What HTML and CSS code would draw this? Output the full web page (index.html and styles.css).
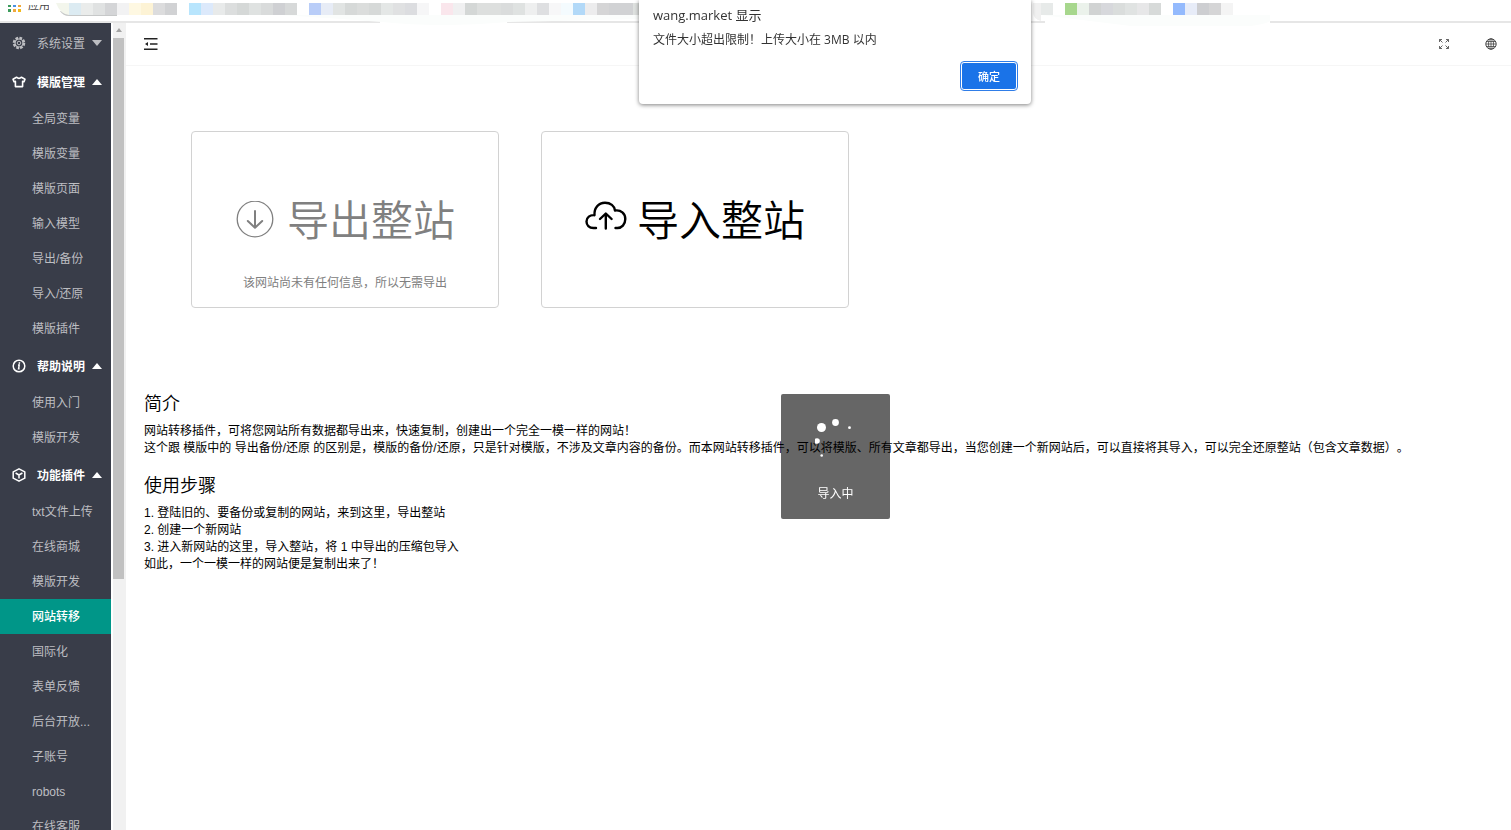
FILE: index.html
```html
<!DOCTYPE html>
<html lang="zh-CN">
<head>
<meta charset="utf-8">
<title>网站转移</title>
<link rel="stylesheet" href="styles.css">
</head>
<body>
<div class="bookmarks">
  <svg class="apps" viewBox="0 0 13 8" aria-hidden="true">
    <path fill="#3c9c5c" d="M0 0h3v2H0zM0 4h3v3H0z"/><path fill="#4a90e2" d="M5 0h3v2H5z"/><path fill="#f0a83c" d="M10 0h3v2h-3zM5 4h3v3H5z"/><path fill="#f2b91c" d="M10 4h3v3h-3z"/>
  </svg>
  <span class="apps-label"><span>应用</span></span>
  <svg class="mosaic" viewBox="56 0 1214 28" aria-hidden="true">
    <path fill="#fff" d="M380 20h127v4H380zM1045 20h225v4h-225z"/>
    <path fill="#fbfdfc" d="M280 15h359v4l-130 3q-70 6-127 0l-40-3zM1041 15h234q0 8-24 11h-120z"/>
    <path fill="#c6c8c8" d="M60 11h57v5H69q-6 0-9-5z"/>
    <path fill="#f3f6ec" d="M56 3h13v12q-9-1-13-12z"/>
    <g>
      <path fill="#dcebf2" d="M69 3h12v12H69z"/><path fill="#eaeceb" d="M81 3h12v12H81z"/><path fill="#e0e2e2" d="M93 3h12v12H93z"/><path fill="#d4d5d7" d="M105 3h12v12h-12z"/><path fill="#f2f2f3" d="M117 3h12v12h-12z"/><path fill="#fef8e2" d="M129 3h12v12h-12z"/><path fill="#fdf3d5" d="M141 3h12v12h-12z"/><path fill="#dcdcdd" d="M153 3h12v12h-12z"/><path fill="#d1d2d4" d="M165 3h12v12h-12z"/>
      <path fill="#b8e5fd" d="M189 3h12v12h-12z"/><path fill="#dce9fb" d="M201 3h12v12h-12z"/><path fill="#e8eaea" d="M213 3h12v12h-12z"/><path fill="#dcdede" d="M225 3h12v12h-12z"/><path fill="#d5d8d7" d="M237 3h12v12h-12z"/><path fill="#dfe2e1" d="M249 3h12v12h-12z"/><path fill="#d9dbdb" d="M261 3h12v12h-12z"/><path fill="#cfd0d3" d="M273 3h12v12h-12z"/><path fill="#d7d9d9" d="M285 3h12v12h-12z"/>
      <path fill="#b9cdf8" d="M309 3h12v12h-12z"/><path fill="#e7ecf6" d="M321 3h12v12h-12z"/><path fill="#e1e4e3" d="M333 3h12v12h-12z"/><path fill="#d6d9d8" d="M345 3h12v12h-12z"/><path fill="#dbdddc" d="M357 3h12v12h-12z"/><path fill="#d6d9d8" d="M369 3h12v12h-12z"/><path fill="#e4e7e6" d="M381 3h12v12h-12z"/><path fill="#e0e1e2" d="M393 3h12v12h-12z"/><path fill="#dcdde0" d="M405 3h12v12h-12z"/><path fill="#f6f6f7" d="M417 3h12v12h-12z"/>
      <path fill="#fae6ec" d="M441 3h12v12h-12z"/><path fill="#f0f0f1" d="M453 3h12v12h-12z"/><path fill="#d4d7d6" d="M465 3h12v12h-12z"/><path fill="#dddfde" d="M477 3h24v12h-24z"/><path fill="#dadcdc" d="M501 3h12v12h-12z"/><path fill="#dfe2e1" d="M513 3h12v12h-12z"/><path fill="#eeefef" d="M525 3h12v12h-12z"/><path fill="#dedfe1" d="M537 3h12v12h-12z"/><path fill="#f7f7f8" d="M549 3h12v12h-12z"/><path fill="#f4fbfe" d="M561 3h12v12h-12z"/><path fill="#b2d9f8" d="M573 3h12v12h-12z"/><path fill="#ececed" d="M585 3h12v12h-12z"/><path fill="#d5d5d6" d="M597 3h12v12h-12z"/><path fill="#d1d2d4" d="M609 3h24v12h-24z"/><path fill="#dee1df" d="M633 3h6v12h-6z"/>
      <path fill="#f0f0f0" d="M1033 3h8v18q-8-2-8-9z"/><path fill="#e7eae9" d="M1041 3h12v12h-12z"/>
      <path fill="#a7d78d" d="M1065 3h12v12h-12z"/><path fill="#ebf2eb" d="M1077 3h12v12h-12z"/><path fill="#d1d3d3" d="M1089 3h12v12h-12z"/><path fill="#d7d8dc" d="M1101 3h12v12h-12z"/><path fill="#dadddc" d="M1113 3h12v12h-12z"/><path fill="#e0e3e2" d="M1125 3h12v12h-12z"/><path fill="#e7e7e8" d="M1137 3h12v12h-12z"/><path fill="#d7dad9" d="M1149 3h12v12h-12z"/>
      <path fill="#94bafd" d="M1173 3h12v12h-12z"/><path fill="#e7ecf8" d="M1185 3h12v12h-12z"/><path fill="#cdced1" d="M1197 3h12v12h-12z"/><path fill="#d5d5d6" d="M1209 3h12v12h-12z"/><path fill="#f4f4f4" d="M1221 3h12v12h-12z"/>
    </g>
  </svg>
</div>

<div class="layout">
  <nav class="sidebar">
    <button class="group" type="button">
      <svg class="group-icon" viewBox="0 0 14 14"><circle cx="7" cy="7" r="5" fill="none" stroke="currentColor" stroke-width="2.600" stroke-dasharray="2.600 1.300"/><circle cx="7" cy="7" r="4" fill="none" stroke="currentColor" stroke-width="1.200"/><circle cx="7" cy="7" r="1.800" fill="none" stroke="currentColor"/></svg>
      <span class="group-label">系统设置</span><i class="caret down"></i>
    </button>
    <button class="group open" type="button">
      <svg class="group-icon" viewBox="0 0 14 14"><path fill="none" stroke="currentColor" stroke-width="1.600" stroke-linejoin="round" d="M4.500 2.200Q7 4.400 9.500 2.200L13 4.200L12 6.800L10.600 6.300V11.600H3.400V6.300L2 6.800L1 4.200Z"/></svg>
      <span class="group-label">模版管理</span><i class="caret up"></i>
    </button>
    <a class="item" href="#">全局变量</a>
    <a class="item" href="#">模版变量</a>
    <a class="item" href="#">模版页面</a>
    <a class="item" href="#">输入模型</a>
    <a class="item" href="#">导出/备份</a>
    <a class="item" href="#">导入/还原</a>
    <a class="item" href="#">模版插件</a>
    <button class="group open" type="button">
      <svg class="group-icon" viewBox="0 0 14 14"><circle cx="7" cy="7" r="5.800" fill="none" stroke="currentColor" stroke-width="1.500"/><path fill="none" stroke="currentColor" stroke-width="1.500" d="M7.600 3.300L7.200 4.800M6 6h1.200L6.600 9.800h1"/></svg>
      <span class="group-label">帮助说明</span><i class="caret up"></i>
    </button>
    <a class="item" href="#">使用入门</a>
    <a class="item" href="#">模版开发</a>
    <button class="group open" type="button">
      <svg class="group-icon" viewBox="0 0 14 14"><path fill="none" stroke="currentColor" stroke-width="1.500" stroke-linejoin="round" d="M7 .8L12.800 3.800V10.200L7 13.200L1.200 10.200V3.800ZM3.600 5L7 7L10.400 5M7 7V10.600"/></svg>
      <span class="group-label">功能插件</span><i class="caret up"></i>
    </button>
    <a class="item" href="#">txt文件上传</a>
    <a class="item" href="#">在线商城</a>
    <a class="item" href="#">模版开发</a>
    <a class="item active" href="#">网站转移</a>
    <a class="item" href="#">国际化</a>
    <a class="item" href="#">表单反馈</a>
    <a class="item" href="#">后台开放...</a>
    <a class="item" href="#">子账号</a>
    <a class="item" href="#">robots</a>
    <a class="item" href="#">在线客服</a>
  </nav>
  <div class="scrollbar" aria-hidden="true"><i class="scroll-arrow"></i><i class="scroll-thumb"></i></div>
  <main class="main">
    <header class="toolbar">
      <button class="tool" type="button" aria-label="收起菜单">
        <svg class="menu-icon" viewBox="0 0 14 12"><path fill="none" stroke="#222" stroke-width="1.400" d="M0 .8h13.500M6 6h7.500M0 11.200h13.500"/><path fill="#222" d="M1 6l3-2v4z"/></svg>
      </button>
      <div class="tools-right">
        <button class="tool" type="button" aria-label="全屏">
          <svg class="tool-icon" viewBox="0 0 12 12"><path fill="none" stroke="#555" stroke-width=".9" d="M1.500 4V1.500H4M1.500 1.500l3 3M8 1.500h2.500V4M10.500 1.500l-3 3M1.500 8v2.500H4M1.500 10.500l3-3M8 10.500h2.500V8M10.500 10.500l-3-3"/></svg>
        </button>
        <button class="tool" type="button" aria-label="网站">
          <svg class="tool-icon" viewBox="0 0 12 12"><g fill="none" stroke="#444"><circle cx="6" cy="6" r="5.200"/><ellipse cx="6" cy="6" rx="2.500" ry="5.200" stroke-width=".8"/><path stroke-width=".8" d="M6 1v10M1 6h10M1.800 3.500h8.400M1.800 8.500h8.400"/></g></svg>
        </button>
      </div>
    </header>
    <div class="content">
      <div class="cards">
        <button class="card muted" type="button">
          <span class="card-title">
            <svg class="card-icon" viewBox="0 0 42 42"><circle cx="20" cy="18" r="17.800" fill="none" stroke="currentColor" stroke-width="1.300"/><path fill="none" stroke="currentColor" stroke-width="2" stroke-linecap="round" stroke-linejoin="round" d="M20 10v16.500M12.800 20L20 26.800L27.200 20"/></svg>
            <span>导出整站</span>
          </span>
          <span class="card-note">该网站尚未有任何信息，所以无需导出</span>
        </button>
        <button class="card" type="button">
          <span class="card-title">
            <svg class="card-icon" viewBox="0 2 42 42"><path fill="none" stroke="currentColor" stroke-width="2.400" stroke-linecap="round" stroke-linejoin="round" d="M11 29H8.500C4 29 1.500 26 1.500 22.500C1.500 18.500 5 15.700 9.500 16.200C9 9 13.500 3.700 20 3.700C25.500 3.700 29.500 7 30 11.500C36 10.500 40.300 14.800 40.300 20C40.300 25.500 36.500 29 32.500 29H30.500M20.800 29.500V15M15 20L20.800 14.500L26.600 20"/></svg>
            <span>导入整站</span>
          </span>
          <span class="card-note"></span>
        </button>
      </div>
      <section class="info">
        <h2>简介</h2>
        <p>网站转移插件，可将您网站所有数据都导出来，快速复制，创建出一个完全一模一样的网站！</p>
        <p>这个跟 模版中的 导出备份/还原 的区别是，模版的备份/还原，只是针对模版，不涉及文章内容的备份。而本网站转移插件，可以将模版、所有文章都导出，当您创建一个新网站后，可以直接将其导入，可以完全还原整站（包含文章数据）。</p>
      </section>
      <section class="info">
        <h2>使用步骤</h2>
        <p>1. 登陆旧的、要备份或复制的网站，来到这里，导出整站</p>
        <p>2. 创建一个新网站</p>
        <p>3. 进入新网站的这里，导入整站，将 1 中导出的压缩包导入</p>
        <p>如此，一个一模一样的网站便是复制出来了！</p>
      </section>
    </div>
  </main>
</div>

<div class="loading" role="status">
  <svg class="spinner" viewBox="0 0 42 42"><g fill="#fff"><circle cx="6.500" cy="8.500" r="4.500"/><circle cx="20.500" cy="3.500" r="3.400"/><circle cx="34.500" cy="8.700" r="1.400"/><circle cx="2" cy="22" r="2.800"/><circle cx="6.700" cy="36.500" r="1.300"/></g></svg>
  <span>导入中</span>
</div>

<div class="dialog" role="alertdialog" aria-labelledby="dialog-title" aria-describedby="dialog-text">
  <div class="dialog-title" id="dialog-title">wang.market 显示</div>
  <div class="dialog-text" id="dialog-text">文件大小超出限制！上传大小在 3MB 以内</div>
  <button class="confirm" type="button">确定</button>
</div>
</body>
</html>
```
FILE: styles.css
```css
* { box-sizing: border-box; }
body {
  margin: 0;
  height: 100vh;
  overflow: hidden;
  display: flex;
  flex-direction: column;
  background: #fff;
  color: #000;
  font: 12px/17px "Liberation Sans", "Noto Sans CJK SC", sans-serif;
  text-spacing-trim: space-all;
}
button { font: inherit; color: inherit; background: none; border: 0; padding: 0; cursor: pointer; }
svg { display: block; flex: none; }

.bookmarks {
  flex: none;
  height: 23px;
  display: flex;
  align-items: flex-start;
  padding-left: 8px;
  border-bottom: 2px solid #e6e6e6;
}
.apps { width: 13px; height: 8px; margin-top: 5px; }
.apps-label {
  display: flex;
  align-items: flex-end;
  width: 28px;
  height: 9px;
  margin-top: 5px;
  padding-left: 7px;
  overflow: hidden;
  color: #444;
  font-size: 11px;
  white-space: nowrap;
}
.mosaic { width: 1214px; height: 28px; margin-left: 7px; }

.layout { flex: 1; min-height: 0; display: flex; }
.sidebar { flex: none; width: 111px; margin-right: 2px; overflow: hidden; background: #393d49; }
.group {
  display: flex;
  align-items: center;
  width: 100%;
  height: 39px;
  padding-left: 12px;
  color: #bdbec2;
}
.group-icon { width: 14px; height: 14px; margin-right: 11px; }
.group-label { padding-top: 3px; }
.open { color: #fff; font-weight: 700; }
.caret { margin-left: 7px; border: 5px solid transparent; }
.down { border-top: 6px solid #bdbec2; border-bottom: 0; }
.up { border-bottom: 6px solid #fff; border-top: 0; }
.item {
  display: block;
  height: 35px;
  padding-left: 32px;
  line-height: 37px;
  color: #bdbec2;
  text-decoration: none;
  white-space: nowrap;
}
.active { background: #009688; color: #fff; font-weight: 500; }

.scrollbar { flex: none; width: 13px; background: #f1f1f1; }
.scroll-arrow { display: block; width: 0; margin: 5px 0 6px 3px; border: 3px solid transparent; border-top: 0; border-bottom: 4px solid #a3a3a3; }
.scroll-thumb { display: block; width: 11px; height: 67%; background: #c1c1c1; }

.main { flex: 1; min-width: 0; }
.toolbar {
  display: flex;
  align-items: center;
  justify-content: space-between;
  height: 43px;
  padding: 0 14px 0 18px;
  border-bottom: 1px solid #f6f6f6;
}
.tools-right { display: flex; gap: 35px; }
.menu-icon { width: 14px; height: 12px; }
.tool-icon { width: 12px; height: 12px; }

.content { padding: 65px 18px 0; }
.cards { display: flex; gap: 42px; padding-left: 47px; margin-bottom: 84px; }
.card {
  display: flex;
  flex-direction: column;
  align-items: center;
  justify-content: flex-end;
  width: 308px;
  height: 177px;
  padding-bottom: 15px;
  border: 1px solid #d2d2d2;
  border-radius: 4px;
}
.muted { color: #808080; }
.card-title { display: flex; align-items: center; gap: 10px; font-size: 42px; line-height: 60px; font-weight: 350; }
.card-icon { width: 42px; height: 42px; }
.card-note { height: 17px; margin-top: 23px; }

.info { margin-bottom: 17px; }
.info h2 { margin: 0 0 7px; font-size: 18px; line-height: 24px; font-weight: 350; }
.info p { margin: 0; }

.loading {
  position: fixed;
  top: 394px;
  left: 781px;
  width: 109px;
  height: 125px;
  display: flex;
  flex-direction: column;
  align-items: center;
  padding-top: 25px;
  border-radius: 2px;
  background: rgba(0, 0, 0, .6);
  color: #fff;
}
.spinner { width: 42px; height: 42px; margin-bottom: 25px; }

.dialog {
  position: fixed;
  top: 0;
  left: 639px;
  width: 392px;
  height: 104px;
  padding: 6px 14px 14px;
  display: flex;
  flex-direction: column;
  border-radius: 0 0 4px 4px;
  background: #fff;
  box-shadow: 0 1px 4px rgba(0, 0, 0, .5);
  color: #333;
  font-family: "Open Sans", "Noto Sans CJK SC", sans-serif;
}
.dialog-title { font-size: 13px; line-height: 18px; }
.dialog-text { margin-top: 7px; }
.confirm {
  align-self: flex-end;
  width: 56px;
  height: 28px;
  margin-top: auto;
  border: 1px solid #fff;
  border-radius: 3px;
  outline: 1px solid #2f7de8;
  background: #1a73e8;
  color: #fff;
  font-size: 11px;
  font-weight: 500;
}
```
